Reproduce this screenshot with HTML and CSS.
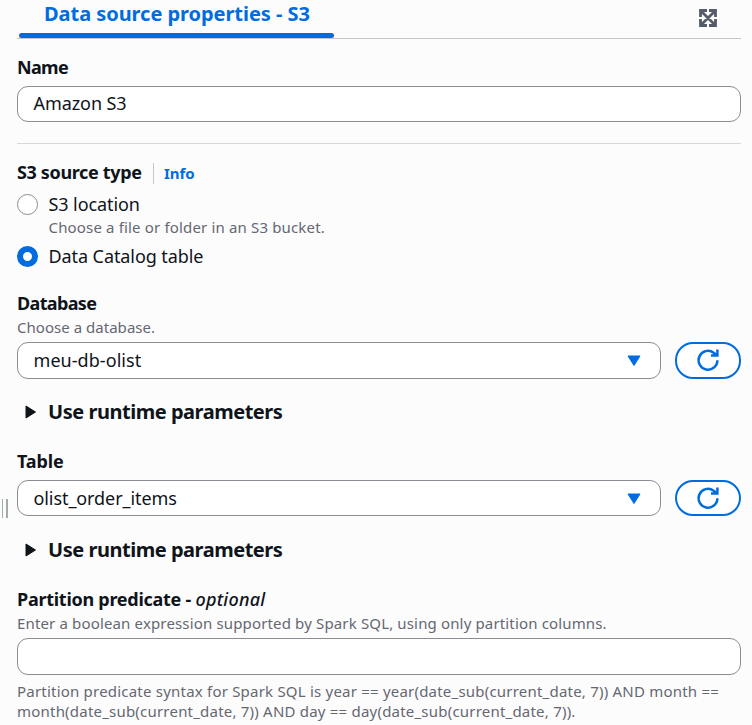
FILE: index.html
```html
<!DOCTYPE html>
<html lang="en">
<head>
<meta charset="utf-8">
<title>Data source properties - S3</title>
<link rel="stylesheet" href="styles.css">
</head>
<body>
<svg class="defs" aria-hidden="true">
  <symbol id="refresh" viewBox="0 0 24 24">
    <path d="M21.4 12.2A9.4 9.4 0 1 1 17.6 4.7L21 7.2M21.4 1.6V7.4H15" fill="none" stroke="currentColor" stroke-width="2.5"/>
  </symbol>
</svg>
<main class="panel">
  <div class="handle"></div>
  <header class="tabs">
    <div class="tab"><span class="tab-label">Data source properties - S3</span><span class="tab-bar"></span></div>
    <button class="expand" aria-label="Expand">
      <svg width="20" height="20" viewBox="0 0 20 20">
        <path d="M2.5 9V2.5H9M11 2.5H17.5V9M17.5 11V17.5H11M9 17.5H2.5V11M2.5 2.5L17.5 17.5M17.5 2.5L2.5 17.5" fill="none" stroke="currentColor" stroke-width="2.8"/>
      </svg>
    </button>
  </header>

  <section class="field name">
    <label class="label">Name</label>
    <div class="input"><span class="value">Amazon S3</span></div>
  </section>

  <section class="source">
    <div class="source-head"><span class="label source-label">S3 source type</span><a class="info">Info</a></div>
    <div class="option">
      <span class="radio"></span>
      <div><div class="value option-name">S3 location</div><div class="hint option-hint">Choose a file or folder in an S3 bucket.</div></div>
    </div>
    <div class="option">
      <span class="radio checked"></span>
      <div class="value option-name">Data Catalog table</div>
    </div>
  </section>

  <section class="field database">
    <label class="label">Database</label>
    <div class="hint">Choose a database.</div>
    <div class="row">
      <div class="input select"><span class="value">meu-db-olist</span><svg class="caret" width="14" height="12" viewBox="0 0 14 12"><path d="M1 1H13L7 10.5Z" fill="currentColor" stroke="currentColor" stroke-linejoin="round"/></svg></div>
      <button class="refresh" aria-label="Refresh"><svg width="24" height="24"><use href="#refresh"/></svg></button>
    </div>
  </section>
  <div class="expander"><svg width="12" height="14" viewBox="0 0 12 14"><path d="M1 1V13L10.5 7Z" fill="currentColor" stroke="currentColor" stroke-linejoin="round"/></svg><span class="expander-label">Use runtime parameters</span></div>

  <section class="field table">
    <label class="label">Table</label>
    <div class="row">
      <div class="input select"><span class="value">olist_order_items</span><svg class="caret" width="14" height="12" viewBox="0 0 14 12"><path d="M1 1H13L7 10.5Z" fill="currentColor" stroke="currentColor" stroke-linejoin="round"/></svg></div>
      <button class="refresh" aria-label="Refresh"><svg width="24" height="24"><use href="#refresh"/></svg></button>
    </div>
  </section>
  <div class="expander second"><svg width="12" height="14" viewBox="0 0 12 14"><path d="M1 1V13L10.5 7Z" fill="currentColor" stroke="currentColor" stroke-linejoin="round"/></svg><span class="expander-label">Use runtime parameters</span></div>

  <section class="field predicate">
    <label class="label"><span>Partition predicate - </span><i class="optional">optional</i></label>
    <div class="hint">Enter a boolean expression supported by Spark SQL, using only partition columns.</div>
    <div class="input tall"></div>
    <div class="hint syntax">Partition predicate syntax for Spark SQL is year == year(date_sub(current_date, 7)) AND month ==<br>month(date_sub(current_date, 7)) AND day == day(date_sub(current_date, 7)).</div>
  </section>
</main>
</body>
</html>
```
FILE: styles.css
```css
* { box-sizing: border-box; }
body {
  margin: 0;
  background: #fcfcfd;
  color: #0f141a;
  font-family: "Noto Sans", sans-serif;
  font-size: 18px;
  line-height: 24px;
}
.defs { position: absolute; width: 0; height: 0; }
.panel { position: relative; height: 725px; padding: 0 11px 0 17px; overflow: hidden; }
.handle {
  position: absolute; left: 2px; top: 499px; width: 6px; height: 19px;
  border: solid #a0acab; border-width: 0 2px 0 1px;
}
.tabs {
  display: flex; justify-content: space-between;
  height: 39px; border-bottom: 1px solid #c6c6cd;
}
.tab {
  display: flex; flex-direction: column; justify-content: space-between;
  width: 315px; height: 38px; margin-left: 2px; padding-top: 2px;
  color: #006ce0; font-size: 20px; font-weight: 700; white-space: nowrap;
}
.tab-label { padding-left: 25px; letter-spacing: -0.05px; }
.tab-bar { height: 5px; border-radius: 3px; background: #006ce0; }
button { padding: 0; border: 0; background: none; }
svg { display: block; }
.expand { align-self: flex-start; width: 20px; height: 20px; margin: 8px 23px 0 0; color: #545b69; }
.label { display: block; font-weight: 700; letter-spacing: -0.35px; white-space: nowrap; }
.name .label, .database .label { letter-spacing: -0.65px; }
.table .label { letter-spacing: -0.1px; }
.name { height: 105px; padding-top: 16px; border-bottom: 1px solid #d6d6db; }
.input {
  display: flex; align-items: center; height: 36px; padding: 0 16px;
  border: 1px solid #8c8c94; border-radius: 11px; background: #fff;
}
.value { letter-spacing: -0.08px; }
.input .value { margin-left: -0.5px; }
.name .input { margin-top: 7px; }
.name .value, .database .value { margin-top: -2px; }
.database .value { letter-spacing: 0.05px; }
.source { padding-top: 17px; height: 147px; }
.source-head { display: flex; align-items: center; height: 24px; }
.source-label { margin-top: -2px; }
.info {
  height: 21px; margin-left: 11px; padding-left: 10.5px;
  border-left: 1px solid #c6c6cd; color: #006ce0;
  font-size: 15px; font-weight: 700; line-height: 21px; letter-spacing: -0.1px;
}
.option { display: flex; gap: 10.5px; padding-top: 8px; white-space: nowrap; }
.option-name { margin-top: -1px; }
.option-hint { margin-top: 1px; }
.radio {
  width: 21px; height: 21px; margin-top: 1px;
  border: 1px solid #8c8c94; border-radius: 50%; background: #fff;
}
.radio.checked { border: 6px solid #006ce0; }
.hint { color: #656871; font-size: 15px; line-height: 20px; letter-spacing: 0.16px; white-space: nowrap; }
.database .hint { margin-top: 2px; letter-spacing: 0.03px; }
.row { display: flex; gap: 14px; }
.select { flex: 1; justify-content: space-between; padding-right: 19px; }
.database .row { margin-top: 5px; }
.database .input, .database .refresh, .tall { height: 37px; }
.caret { color: #006ce0; }
.refresh {
  display: flex; align-items: center; justify-content: center;
  width: 66px; height: 36px; border: 2px solid #006ce0; border-radius: 18px;
  background: #fff; color: #006ce0;
}
.database .refresh { padding-bottom: 1px; }
.expander { display: flex; align-items: center; height: 24px; margin-top: 21px; padding-left: 8px; font-size: 20px; font-weight: 700; letter-spacing: -0.47px; white-space: nowrap; }
.expander svg { margin: -1px 11px 0 0; }
.second { margin-top: 22px; }
.table { padding-top: 25px; }
.table .row { margin-top: 7px; }
.table .caret { margin-top: 1px; }
.predicate { padding-top: 25px; }
.predicate .label { letter-spacing: -0.27px; }
.predicate .hint { margin-top: 2px; letter-spacing: 0.15px; }
.tall { margin-top: 5px; }
.predicate .optional { font-weight: 500; letter-spacing: 0.25px; }
.predicate .syntax { margin-top: 6px; letter-spacing: 0.21px; }
```
